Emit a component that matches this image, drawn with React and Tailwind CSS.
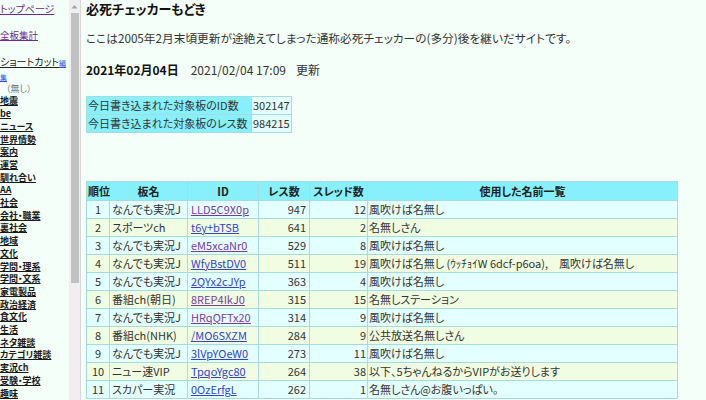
const nav = [
  "地震", "be", "ニュース", "世界情勢", "案内", "運営", "馴れ合い", "AA", "社会", "会社・職業",
  "裏社会", "地域", "文化", "学問・理系", "学問・文系", "家電製品", "政治経済", "食文化", "生活",
  "ネタ雑談", "カテゴリ雑談", "実況ch", "受験・学校", "趣味",
];

const rows = [
  [1, "なんでも実況J", "LLD5C9X0p", true, 947, 12, "風吹けば名無し"],
  [2, "スポーツch", "t6y+bTSB", false, 641, 2, "名無しさん"],
  [3, "なんでも実況J", "eM5xcaNr0", true, 529, 8, "風吹けば名無し"],
  [4, "なんでも実況J", "WfyBstDV0", false, 511, 19, "風吹けば名無し (ｳｯﾁｮｲW 6dcf-p6oa),　風吹けば名無し"],
  [5, "なんでも実況J", "2QYx2cJYp", false, 363, 4, "風吹けば名無し"],
  [6, "番組ch(朝日)", "8REP4IkJ0", true, 315, 15, "名無しステーション"],
  [7, "なんでも実況J", "HRqQFTx20", true, 314, 9, "風吹けば名無し"],
  [8, "番組ch(NHK)", "/MO6SXZM", false, 284, 9, "公共放送名無しさん"],
  [9, "なんでも実況J", "3lVpYOeW0", false, 273, 11, "風吹けば名無し"],
  [10, "ニュー速VIP", "TpqoYgc80", false, 264, 38, "以下、5ちゃんねるからVIPがお送りします"],
  [11, "スカパー実況", "0OzErfgL", false, 262, 1, "名無しさん@お腹いっぱい。"],
];

const cell = "border border-[#a6dcdc] h-[18px] py-0 leading-[17px] whitespace-nowrap";
const head = "border border-[#a6dcdc] h-[19px] py-0 leading-[18px] whitespace-nowrap";

export default function App() {
  return (
    <div className="flex h-[400px] w-[706px] overflow-hidden bg-[#f5fff9] text-[#222] font-['Noto_Sans_CJK_JP',sans-serif]">
      {/* left frame */}
      <nav className="w-[69px] shrink-0 pt-[2px] text-[9px] leading-[12.7px] [font-feature-settings:'palt']">
        <a className="block text-[10px] text-[#6b2c91] underline mt-[1px]">トップページ</a>
        <a className="block text-[9.5px] text-[#6b2c91] underline mt-[13px]">全板集計</a>
        <div className="mt-[15px] text-[10px] leading-[12.5px]">
          <span className="underline">ショートカット</span>
          <a className="text-[7px] text-[#3355dd] underline">編集</a>
        </div>
        <div className="pl-[6px] text-[#777] leading-[12px]">（無し）</div>
        {nav.map((n) => (
          <a key={n} className="block underline font-bold text-[#1a1a1a]">{n}</a>
        ))}
      </nav>

      {/* scrollbar */}
      <div className="w-[11px] shrink-0 bg-[#f0eef0] flex flex-col items-center">
        <svg width="7" height="5" viewBox="0 0 7 5" className="mt-[4px]">
          <path d="M0.5 4.5 L3.5 1 L6.5 4.5 Z" fill="#a3a3a3" />
        </svg>
        <div className="mt-[4px] w-[8px] h-[270px] bg-[#c1c1c1]" />
      </div>
      <div className="w-px shrink-0 bg-[#d6d6d6]" />

      {/* main frame */}
      <main className="flex-1 pl-[5px] [font-feature-settings:'palt']">
        <h1 className="text-[13px] font-bold leading-[17px] text-[#111]">必死チェッカーもどき</h1>
        <p className="mt-[12px] text-[11.7px] leading-[17px] text-[#333]">
          ここは2005年2月末頃更新が途絶えてしまった通称必死チェッカーの(多分)後を継いだサイトです。
        </p>
        <p className="mt-[15px] text-[12px] leading-[17px] text-[#333]">
          <b className="text-[#111]">2021年02月04日</b>
          <span className="ml-[12px]">2021/02/04 17:09</span>
          <span className="ml-[10px]">更新</span>
        </p>
        <table className="mt-[18px] border-collapse text-[11px] text-[#333]">
          <tbody>
            <tr>
              <td className={cell + " bg-[#88f0fc] px-[1px] w-[165px]"}>今日書き込まれた対象板のID数</td>
              <td className={cell + " bg-[#e2fcff] px-[1px]"}>302147</td>
            </tr>
            <tr>
              <td className={cell + " bg-[#88f0fc] px-[1px]"}>今日書き込まれた対象板のレス数</td>
              <td className={cell + " bg-[#e2fcff] px-[1px]"}>984215</td>
            </tr>
          </tbody>
        </table>

        <table className="mt-[48px] border-collapse text-[11px] text-[#333] table-fixed w-[592px]">
          <colgroup>
            <col className="w-[23px]" />
            <col className="w-[78px]" />
            <col className="w-[71px]" />
            <col className="w-[51px]" />
            <col className="w-[58px]" />
            <col />
          </colgroup>
          <thead>
            <tr className="bg-[#88f0fc] text-[#222]">
              <th className={head + " px-[1px] text-left"}>順位</th>
              <th className={head}>板名</th>
              <th className={head}>ID</th>
              <th className={head}>レス数</th>
              <th className={head}>スレッド数</th>
              <th className={head}>使用した名前一覧</th>
            </tr>
          </thead>
          <tbody>
            {rows.map(([rank, board, id, visited, res, thr, names]) => (
              <tr key={rank} className={rank % 2 ? "bg-[#e4ffff]" : "bg-[#f0fde2]"}>
                <td className={cell + " text-center"}>{rank}</td>
                <td className={cell + " px-[2px]"}>{board}</td>
                <td className={cell + " px-[3px]"}>
                  <a className={"underline " + (visited ? "text-[#7a3aa0]" : "text-[#3344cc]")}>{id}</a>
                </td>
                <td className={cell + " text-right pr-[3px]"}>{res}</td>
                <td className={cell + " text-right pr-[1px]"}>{thr}</td>
                <td className={cell + " px-[1px]"}>{names}</td>
              </tr>
            ))}
          </tbody>
        </table>
      </main>
    </div>
  );
}
